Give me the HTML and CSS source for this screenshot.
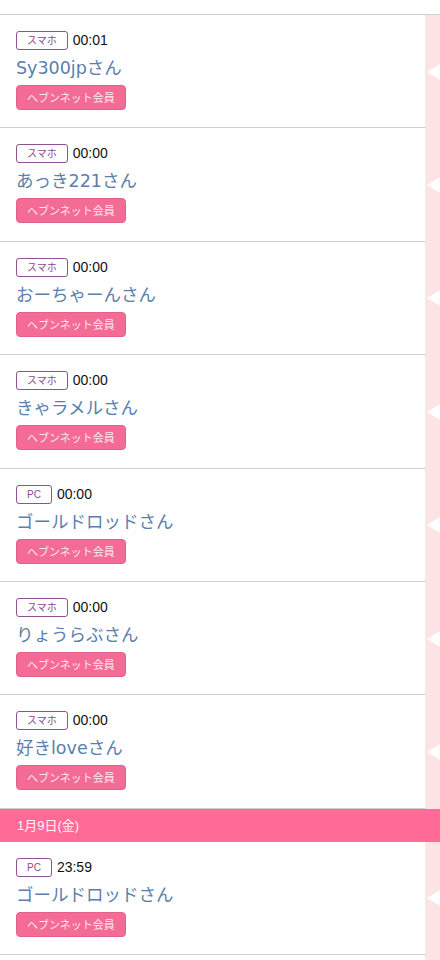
FILE: index.html
```html
<!DOCTYPE html>
<html lang="ja">
<head>
<meta charset="utf-8">
<title>足あと</title>
<link rel="stylesheet" href="styles.css">
</head>
<body>
<div class="page">
  <div class="top"></div>

  <div class="row">
    <div class="entry">
      <div class="meta"><span class="device">スマホ</span><span class="time">00:01</span></div>
      <div class="name">Sy300jpさん</div>
      <span class="member">ヘブンネット会員</span>
    </div>
    <div class="side"><span class="notch"></span></div>
  </div>

  <div class="row">
    <div class="entry">
      <div class="meta"><span class="device">スマホ</span><span class="time">00:00</span></div>
      <div class="name">あっき221さん</div>
      <span class="member">ヘブンネット会員</span>
    </div>
    <div class="side"><span class="notch"></span></div>
  </div>

  <div class="row">
    <div class="entry">
      <div class="meta"><span class="device">スマホ</span><span class="time">00:00</span></div>
      <div class="name">おーちゃーんさん</div>
      <span class="member">ヘブンネット会員</span>
    </div>
    <div class="side"><span class="notch"></span></div>
  </div>

  <div class="row">
    <div class="entry">
      <div class="meta"><span class="device">スマホ</span><span class="time">00:00</span></div>
      <div class="name">きゃラメルさん</div>
      <span class="member">ヘブンネット会員</span>
    </div>
    <div class="side"><span class="notch"></span></div>
  </div>

  <div class="row">
    <div class="entry">
      <div class="meta"><span class="device">PC</span><span class="time">00:00</span></div>
      <div class="name">ゴールドロッドさん</div>
      <span class="member">ヘブンネット会員</span>
    </div>
    <div class="side"><span class="notch"></span></div>
  </div>

  <div class="row">
    <div class="entry">
      <div class="meta"><span class="device">スマホ</span><span class="time">00:00</span></div>
      <div class="name">りょうらぶさん</div>
      <span class="member">ヘブンネット会員</span>
    </div>
    <div class="side"><span class="notch"></span></div>
  </div>

  <div class="row">
    <div class="entry">
      <div class="meta"><span class="device">スマホ</span><span class="time">00:00</span></div>
      <div class="name">好きloveさん</div>
      <span class="member">ヘブンネット会員</span>
    </div>
    <div class="side"><span class="notch"></span></div>
  </div>

  <div class="date">1月9日(金)</div>

  <div class="row">
    <div class="entry">
      <div class="meta"><span class="device">PC</span><span class="time">23:59</span></div>
      <div class="name">ゴールドロッドさん</div>
      <span class="member">ヘブンネット会員</span>
    </div>
    <div class="side"><span class="notch"></span></div>
  </div>

  <div class="row tail">
    <div class="entry"></div>
    <div class="side"></div>
  </div>
</div>
</body>
</html>
```

FILE: styles.css
```css
html, body {
  margin: 0;
  padding: 0;
  background: #ffffff;
}

body {
  font-family: "Liberation Sans", "Noto Sans CJK JP", sans-serif;
  color: #111;
  overflow: hidden;
}

.page {
  width: 440px;
  display: flex;
  flex-direction: column;
}

.top {
  height: 14px;
  border-bottom: 1px solid #cfcfcf;
}

.row {
  display: flex;
  height: 113.4px;
}

.entry {
  flex: 1;
  box-sizing: border-box;
  border-bottom: 1px solid #cfcfcf;
  border-right: 1px solid #f1eeee;
  padding: 16px 0 0 16px;
  display: flex;
  flex-direction: column;
  align-items: flex-start;
}

.side {
  width: 14px;
  background: #fde3e3;
  display: flex;
  align-items: center;
  justify-content: flex-end;
}

.notch {
  width: 0;
  height: 0;
  border-top: 8px solid transparent;
  border-bottom: 8px solid transparent;
  border-right: 13px solid #ffffff;
}

.meta {
  display: flex;
  align-items: center;
  gap: 5px;
  height: 19px;
}

.device {
  box-sizing: border-box;
  height: 19px;
  line-height: 17px;
  padding: 0 10px;
  border: 1px solid #8e5290;
  border-radius: 3px;
  font-size: 10px;
  color: #8b4a8d;
  font-family: "Liberation Sans", "Noto Sans CJK JP", sans-serif;
}

.time {
  font-size: 14px;
  color: #111;
  line-height: 19px;
}

.name {
  margin-top: 6px;
  font-family: "DejaVu Sans", "Noto Sans CJK JP", sans-serif;
  font-size: 17.5px;
  line-height: 24px;
  height: 24px;
  color: #5a7fac;
}

.member {
  margin-top: 5px;
  box-sizing: border-box;
  height: 25px;
  line-height: 23px;
  padding: 0 10px;
  background: #f46c96;
  border: 1px solid #e3608a;
  border-radius: 4px;
  color: #fde9ef;
  font-size: 11px;
  font-family: "Noto Sans CJK JP", sans-serif;
}

.date {
  height: 33px;
  line-height: 33px;
  background: #ff6b96;
  color: #fff3f6;
  font-size: 13px;
  padding-left: 17px;
}

.row.tail {
  height: 10px;
}

.row.tail .entry {
  border-bottom: none;
}
```
